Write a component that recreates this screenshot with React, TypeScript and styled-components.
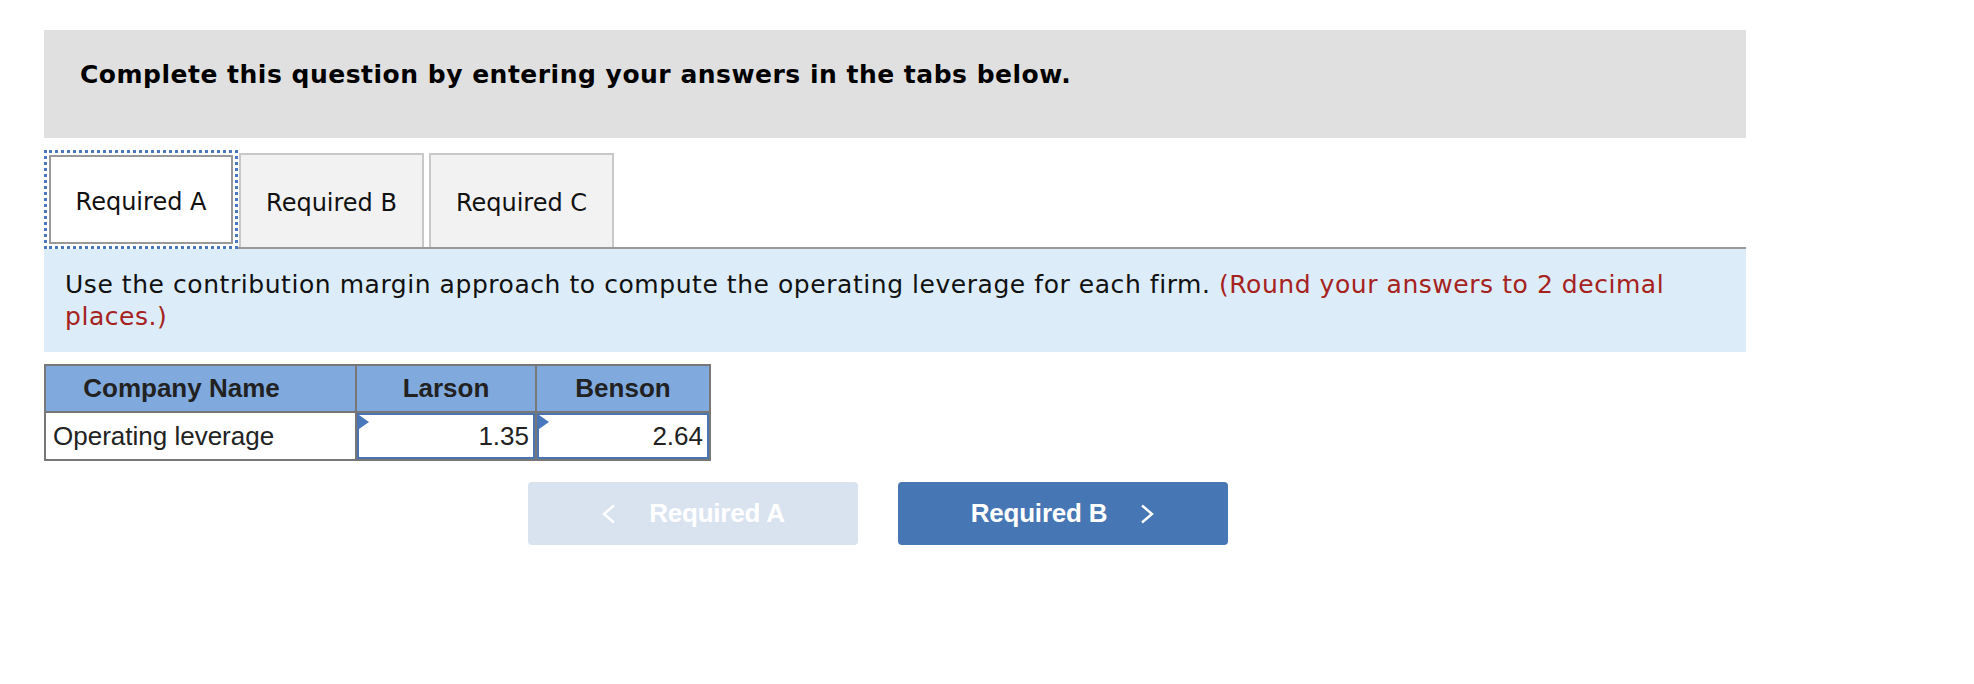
import React from "react";
import styled, { createGlobalStyle } from "styled-components";

const GlobalStyle = createGlobalStyle`
  body {
    margin: 0;
    background: #ffffff;
  }
`;

const verdana = `"DejaVu Sans", Verdana, sans-serif`;
const arial = `"Liberation Sans", Arial, Helvetica, sans-serif`;

const Page = styled.div`
  width: 1702px;
  padding: 30px 0 0 44px;
  font-family: ${verdana};
`;

const Header = styled.div`
  height: 108px;
  box-sizing: border-box;
  padding: 30px 36px 0;
  background: #e0e0e0;
  font-size: 25px;
  font-weight: bold;
  letter-spacing: 0.5px;
  line-height: 30px;
  color: #000;
`;

const TabList = styled.div`
  display: flex;
  align-items: flex-end;
  margin-top: 12px;
  border-bottom: 2px solid #999;
`;

const Tab = styled.div<{ $active?: boolean; $gap: number }>`
  box-sizing: border-box;
  display: flex;
  align-items: center;
  justify-content: center;
  margin-left: ${(p) => p.$gap}px;
  padding-top: 4px;
  font-size: 24px;
  color: #111;
  ${(p) =>
    p.$active
      ? `
    width: 194px;
    height: 99px;
    margin-bottom: -2px;
    border: 3px dotted #4a78c0;
    background: #fff;
    box-shadow: inset 0 0 0 2px #fff, inset 0 0 0 4px #999;
    position: relative;
  `
      : `
    width: 185px;
    height: 94px;
    border: 2px solid #c8c8c8;
    border-bottom: none;
    background: #f2f2f2;
  `}
`;

const Instruction = styled.div`
  box-sizing: border-box;
  height: 103px;
  padding: 20px 21px 0;
  background: #ddecf9;
  font-size: 25px;
  letter-spacing: 0.55px;
  line-height: 32px;
  color: #111;
`;

const Hint = styled.span`
  color: #a52220;
`;

const Table = styled.table`
  margin-top: 12px;
  width: 665px;
  border-collapse: collapse;
  font-family: ${arial};
  font-size: 26px;
  color: #222;
  table-layout: fixed;

  td,
  th {
    border: 2px solid #777;
    padding: 0;
  }
`;

const HeadCell = styled.th<{ $pad?: number }>`
  height: 45px;
  background: #80aade;
  font-weight: bold;
  text-align: center;
  padding-right: ${(p) => p.$pad ?? 0}px !important;
`;

const LabelCell = styled.td`
  height: 46px;
  padding-left: 7px !important;
  text-align: left;
`;

const AnswerBox = styled.div`
  position: relative;
  box-sizing: border-box;
  height: 46px;
  border: 2px solid #4a74b2;
  padding-right: 4px;
  display: flex;
  align-items: center;
  justify-content: flex-end;
  background: #fff;

  &::before {
    content: "";
    position: absolute;
    left: 0;
    top: 0;
    border-top: 7px solid transparent;
    border-bottom: 7px solid transparent;
    border-left: 10px solid #4a78bd;
  }
`;

const ButtonRow = styled.div`
  display: flex;
  gap: 40px;
  margin-top: 21px;
  padding-left: 484px;
`;

const NavButton = styled.button<{ $disabled?: boolean }>`
  width: 330px;
  height: 63px;
  border: none;
  border-radius: 4px;
  display: flex;
  align-items: center;
  justify-content: center;
  gap: 33px;
  background: ${(p) => (p.$disabled ? "#d9e3ef" : "#4676b4")};
  color: #fff;
  font-family: ${arial};
  font-size: 26px;
  font-weight: bold;
  letter-spacing: -0.2px;
  cursor: ${(p) => (p.$disabled ? "default" : "pointer")};
`;

const Chevron = ({ dir }: { dir: "left" | "right" }) => (
  <svg width="15" height="20" viewBox="0 0 15 20" fill="none">
    <path
      d={dir === "left" ? "M13 1.5 L3 10 L13 18.5" : "M2 1.5 L12 10 L2 18.5"}
      stroke="#fff"
      strokeWidth="2.4"
    />
  </svg>
);

export default function App() {
  return (
    <>
      <GlobalStyle />
      <Page>
        <Header>Complete this question by entering your answers in the tabs below.</Header>
        <TabList>
          <Tab $active $gap={0}>
            Required A
          </Tab>
          <Tab $gap={1}>Required B</Tab>
          <Tab $gap={5}>Required C</Tab>
        </TabList>
        <Instruction>
          Use the contribution margin approach to compute the operating leverage for each firm.{" "}
          <Hint>(Round your answers to 2 decimal places.)</Hint>
        </Instruction>
        <Table>
          <colgroup>
            <col style={{ width: 311 }} />
            <col style={{ width: 180 }} />
            <col style={{ width: 174 }} />
          </colgroup>
          <thead>
            <tr>
              <HeadCell $pad={38}>Company Name</HeadCell>
              <HeadCell>Larson</HeadCell>
              <HeadCell>Benson</HeadCell>
            </tr>
          </thead>
          <tbody>
            <tr>
              <LabelCell>Operating leverage</LabelCell>
              <td>
                <AnswerBox>1.35</AnswerBox>
              </td>
              <td>
                <AnswerBox>2.64</AnswerBox>
              </td>
            </tr>
          </tbody>
        </Table>
        <ButtonRow>
          <NavButton $disabled>
            <Chevron dir="left" />
            <span>Required A</span>
          </NavButton>
          <NavButton>
            <span>Required B</span>
            <Chevron dir="right" />
          </NavButton>
        </ButtonRow>
      </Page>
    </>
  );
}
